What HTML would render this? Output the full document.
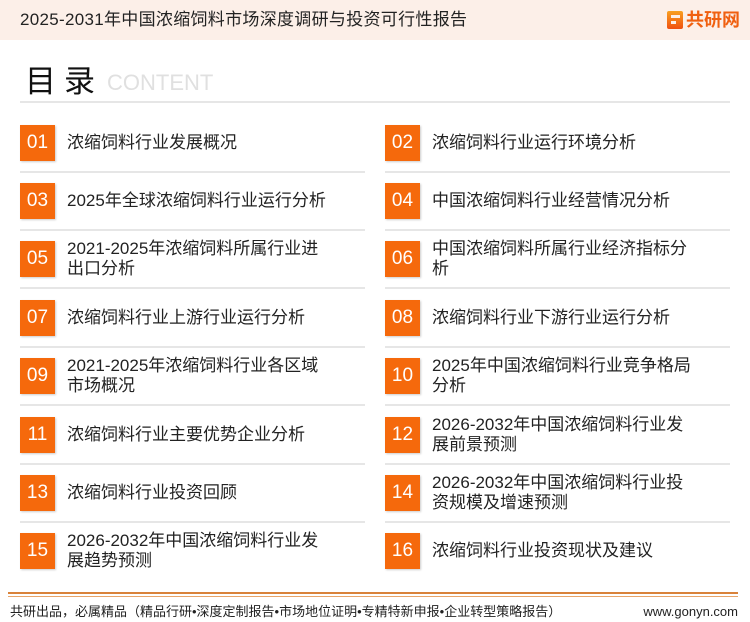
<!DOCTYPE html>
<html><head><meta charset="utf-8"><style>
*{margin:0;padding:0;box-sizing:border-box}
body{width:750px;height:622px;background:#fff;font-family:"Liberation Sans","Noto Sans CJK SC",sans-serif;position:relative;overflow:hidden;color:#222}
.hd{position:absolute;left:0;top:0;width:750px;height:40px;background:#fcefe8}
.hd .t{position:absolute;left:20px;top:9px;font-size:17px;letter-spacing:0.3px;color:#222;line-height:22px}
.logo{position:absolute;left:667px;top:9px;display:flex;align-items:center;gap:3px;color:#f06010;font-weight:bold;font-size:18px;line-height:22px}
.g{width:16px;height:18px;background:linear-gradient(#f8a020,#f05010);border-radius:2px;position:relative}
.g:after{content:"";position:absolute;left:4px;top:4px;width:9px;height:3px;background:#fcefe8}
.g:before{content:"";position:absolute;left:4px;top:10px;width:5px;height:3px;background:#fcefe8}
.ml{position:absolute;left:25px;top:62px;font-size:31px;color:#111;letter-spacing:8px;line-height:40px}
.ct{position:absolute;left:107px;top:70px;font-size:22px;color:#e0e0e0;line-height:26px}
.hl{position:absolute;left:20px;top:101px;width:710px;height:2px;background:#e6e6e6}
.it{position:absolute;width:345px;height:58px}
.n{position:absolute;left:0;top:0;width:35px;height:36px;background:#f5690c;color:#fff;font-size:19px;text-align:center;line-height:36px;box-shadow:1px 1px 2px rgba(0,0,0,.2)}
.tx{position:absolute;left:47px;top:0;height:36px;width:298px;display:flex;align-items:center;font-size:17px;line-height:20px;color:#222;white-space:nowrap}
.sep{position:absolute;left:0;top:46px;width:345px;height:2px;background:#e6e6e6}
.ft1{position:absolute;left:8px;top:592px;width:730px;height:2px;background:#d9823a}
.ft2{position:absolute;left:8px;top:596px;width:730px;height:1px;background:#e8a56a}
.fl{position:absolute;left:10px;top:604px;font-size:13px;color:#222;line-height:16px}
.fr{position:absolute;right:12px;top:604px;font-size:13px;color:#222;line-height:16px}
</style></head><body>
<div class="hd"><div class="t">2025-2031年中国浓缩饲料市场深度调研与投资可行性报告</div>
<div class="logo"><div class="g"></div>共研网</div></div>
<div class="ml">目录</div><div class="ct">CONTENT</div>
<div class="hl"></div>

<div class="it" style="left:20px;top:125px"><div class="n">01</div><div class="tx">浓缩饲料行业发展概况</div><div class="sep"></div></div>
<div class="it" style="left:385px;top:125px"><div class="n">02</div><div class="tx">浓缩饲料行业运行环境分析</div><div class="sep"></div></div>
<div class="it" style="left:20px;top:183px"><div class="n">03</div><div class="tx">2025年全球浓缩饲料行业运行分析</div><div class="sep"></div></div>
<div class="it" style="left:385px;top:183px"><div class="n">04</div><div class="tx">中国浓缩饲料行业经营情况分析</div><div class="sep"></div></div>
<div class="it" style="left:20px;top:241px"><div class="n">05</div><div class="tx">2021-2025年浓缩饲料所属行业进<br>出口分析</div><div class="sep"></div></div>
<div class="it" style="left:385px;top:241px"><div class="n">06</div><div class="tx">中国浓缩饲料所属行业经济指标分<br>析</div><div class="sep"></div></div>
<div class="it" style="left:20px;top:300px"><div class="n">07</div><div class="tx">浓缩饲料行业上游行业运行分析</div><div class="sep"></div></div>
<div class="it" style="left:385px;top:300px"><div class="n">08</div><div class="tx">浓缩饲料行业下游行业运行分析</div><div class="sep"></div></div>
<div class="it" style="left:20px;top:358px"><div class="n">09</div><div class="tx">2021-2025年浓缩饲料行业各区域<br>市场概况</div><div class="sep"></div></div>
<div class="it" style="left:385px;top:358px"><div class="n">10</div><div class="tx">2025年中国浓缩饲料行业竞争格局<br>分析</div><div class="sep"></div></div>
<div class="it" style="left:20px;top:417px"><div class="n">11</div><div class="tx">浓缩饲料行业主要优势企业分析</div><div class="sep"></div></div>
<div class="it" style="left:385px;top:417px"><div class="n">12</div><div class="tx">2026-2032年中国浓缩饲料行业发<br>展前景预测</div><div class="sep"></div></div>
<div class="it" style="left:20px;top:475px"><div class="n">13</div><div class="tx">浓缩饲料行业投资回顾</div><div class="sep"></div></div>
<div class="it" style="left:385px;top:475px"><div class="n">14</div><div class="tx">2026-2032年中国浓缩饲料行业投<br>资规模及增速预测</div><div class="sep"></div></div>
<div class="it" style="left:20px;top:533px"><div class="n">15</div><div class="tx">2026-2032年中国浓缩饲料行业发<br>展趋势预测</div></div>
<div class="it" style="left:385px;top:533px"><div class="n">16</div><div class="tx">浓缩饲料行业投资现状及建议</div></div>

<div class="ft1"></div><div class="ft2"></div>
<div class="fl">共研出品，必属精品（精品行研•深度定制报告•市场地位证明•专精特新申报•企业转型策略报告）</div>
<div class="fr">www.gonyn.com</div>
</body></html>
